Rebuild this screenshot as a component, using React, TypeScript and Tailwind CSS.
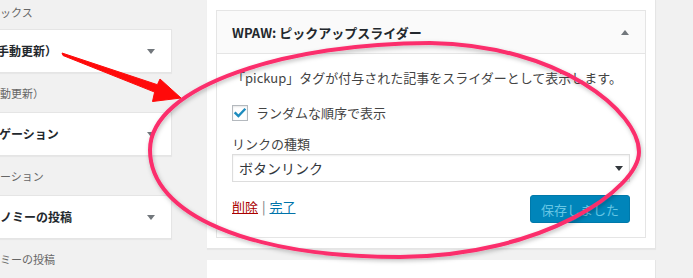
import React from "react";

const font = { fontFamily: '"Noto Sans CJK JP", "Noto Sans", sans-serif' };

const leftItems = [
  { title: "手動更新）", shift: "-ml-[3px]", desc: "動更新）" },
  { title: "ゲーション", shift: "-ml-[1px]", desc: "ーション" },
  { title: "ノミーの投稿", shift: "ml-0", desc: "ミーの投稿" },
];

function DownArrow({ color = "border-t-[#72777c]" }: { color?: string }) {
  return <span className={`block w-0 h-0 border-l-[4px] border-r-[4px] border-t-[5px] border-l-transparent border-r-transparent ${color}`} />;
}

function WidgetBox({ title, shift }: { title: string; shift: string }) {
  return (
    <div className="h-[44px] bg-white border border-l-0 border-[#e5e5e5] shadow-[0_1px_1px_rgba(0,0,0,0.04)] flex items-center justify-between pr-[16px]">
      <span className={`text-[12px] font-bold text-[#23282d] leading-none whitespace-nowrap ${shift}`}>{title}</span>
      <DownArrow />
    </div>
  );
}

export default function App() {
  return (
    <div className="relative w-[693px] h-[278px] overflow-hidden bg-[#f1f1f1]" style={font}>
      <div className="flex">
        {/* available widgets (cut off on the left) */}
        <div className="w-[172px] flex flex-col">
          <div className="h-[29px] pt-[5px] text-[11px] leading-[14px] text-[#666]">ックス</div>
          {leftItems.map((item) => (
            <div key={item.title}>
              <WidgetBox title={item.title} shift={item.shift} />
              <div className="h-[39px] pt-[13px] text-[11px] leading-[14px] text-[#666] whitespace-nowrap">{item.desc}</div>
            </div>
          ))}
        </div>

        {/* sidebar area */}
        <div className="ml-[35px] w-[449px] flex flex-col">
          <div className="bg-white border-r border-b border-[#e5e5e5] pt-[10px] pb-[10px] px-[9px] shadow-[0_1px_1px_rgba(0,0,0,0.04)]">
            <div className="border border-[#e5e5e5] bg-white">
              <div className="h-[43px] bg-[#fafafa] border-b border-[#e5e5e5] flex items-center justify-between pl-[15px] pr-[16px]">
                <span className="text-[13px] font-bold text-[#23282d] leading-none">WPAW: ピックアップスライダー</span>
                <span className="block w-0 h-0 border-l-[4px] border-r-[4px] border-b-[5px] border-l-transparent border-r-transparent border-b-[#72777c]" />
              </div>
              <div className="px-[15px] pt-[15px] pb-[14px] text-[13px] text-[#444]">
                <p className="leading-[18px]">「pickup」タグが付与された記事をスライダーとして表示します。</p>
                <label className="mt-[17px] flex items-center gap-[8px] leading-[18px]">
                  <span className="w-[16px] h-[16px] border border-[#b4b9be] bg-white shadow-[inset_0_1px_2px_rgba(0,0,0,0.1)] flex items-center justify-center">
                    <svg width="14" height="14" viewBox="0 0 14 14">
                      <path d="M2.5 7.2 L5.4 10 L11.5 3.6" fill="none" stroke="#1e8cbe" strokeWidth="2.4" strokeLinecap="square" />
                    </svg>
                  </span>
                  ランダムな順序で表示
                </label>
                <div className="mt-[14px] leading-[16px]">リンクの種類</div>
                <div className="mt-[2px] h-[28px] border border-[#ddd] bg-white flex items-center justify-between pl-[6px] pr-[6px] shadow-[inset_0_1px_2px_rgba(0,0,0,0.07)]">
                  <span className="text-[14px] text-[#32373c] leading-none">ボタンリンク</span>
                  <DownArrow color="border-t-[#32373c]" />
                </div>
                <div className="mt-[13px] flex items-start justify-between">
                  <div className="mt-[4px] leading-[16px]">
                    <a className="text-[#a00] underline">削除</a>
                    <span className="text-[#72777c] mx-[4px]">|</span>
                    <a className="text-[#0073aa] underline">完了</a>
                  </div>
                  <button className="w-[100px] h-[28px] rounded-[3px] bg-[#0085ba] border border-[#0079aa] text-[#66c6e4] text-[13px] leading-none">
                    保存しました
                  </button>
                </div>
              </div>
            </div>
          </div>
          <div className="mt-[11px] h-[40px] bg-white border-r border-[#e5e5e5]" />
        </div>
      </div>

      {/* annotation overlay */}
      <svg className="absolute inset-0 pointer-events-none" width="693" height="278" viewBox="0 0 693 278">
        <defs>
          <filter id="sh" x="-10%" y="-10%" width="120%" height="120%">
            <feDropShadow dx="1" dy="2" stdDeviation="2" floodColor="#000" floodOpacity="0.25" />
          </filter>
        </defs>
        <path
          d="M150 150 C150 85 290 43 430 43 C560 45 639 112 639 152 C639 188 545 256 400 257 C250 257 150 215 150 150 Z"
          fill="none"
          stroke="#fb2f6c"
          strokeWidth="4"
          filter="url(#sh)"
        />
        <polygon
          points="62,53 157.4,84.7 160,79 181,98 152.5,101.5 154.6,92.1 63,55.5"
          fill="#ff0a0a"
          stroke="#ff0a0a"
          strokeWidth="1"
          strokeLinejoin="round"
        />
      </svg>
    </div>
  );
}
